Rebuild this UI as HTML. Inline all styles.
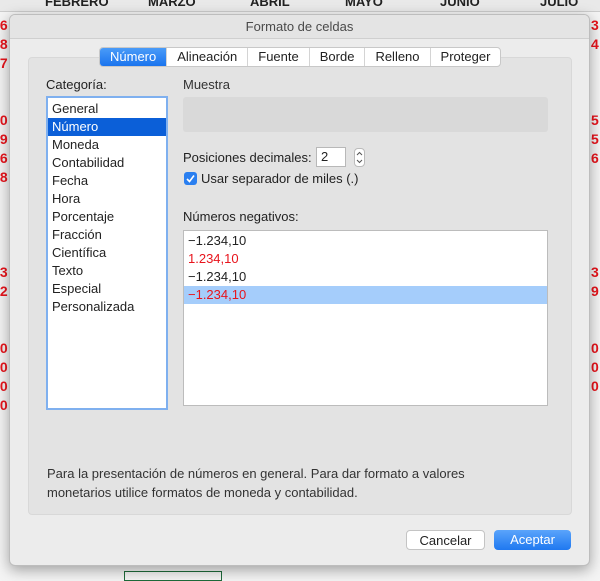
<!DOCTYPE html>
<html><head><meta charset="utf-8"><style>
*{margin:0;padding:0;box-sizing:border-box}
body{width:600px;height:579px;overflow:hidden;background:#f4f4f4;font-family:"Liberation Sans",sans-serif;font-size:13px;color:#222;position:relative}
.a{position:absolute}
.red{color:#e8141c}
.hdr{left:0;top:0;width:600px;height:12px;background:#e9e9e9;border-bottom:1px solid #ccc;font-weight:bold;font-size:13px;overflow:hidden}
.dlg{left:9px;top:14px;width:581px;height:552px;background:#ececec;border:1px solid #bdbdbd;border-radius:6px;box-shadow:0 4px 14px rgba(0,0,0,.35);overflow:hidden}
.title{left:0;top:0;width:100%;height:24px;background:#e4e4e4;border-bottom:1px solid #cfcfcf;text-align:center;line-height:24px;color:#4a4a4a;font-size:13px}
.panel{left:18px;top:42px;width:544px;height:458px;background:#e3e3e3;border-radius:4px;border:1px solid #d8d8d8}
.tabs{left:89px;top:32px;height:20px;display:flex;background:#fff;border:1px solid #c8c8c8;border-radius:4px;overflow:hidden}
.tabs div{padding:0 10px;line-height:18px;border-left:1px solid #d4d4d4;font-size:13px}
.tabs div:first-child{border-left:none;background:linear-gradient(#4a9bf8,#1a74ee);color:#fff}
.list{background:#fff;border:1px solid #bcbcbc}
.row{height:18px;line-height:18px;padding-left:4px;font-size:13px}
.btn{height:20px;border-radius:4px;text-align:center;line-height:19px;font-size:13px}
</style></head><body>
<div class="a hdr"><span style="position:absolute;left:45px;top:-6px">FEBRERO</span><span style="position:absolute;left:148px;top:-6px">MARZO</span><span style="position:absolute;left:250px;top:-6px">ABRIL</span><span style="position:absolute;left:345px;top:-6px">MAYO</span><span style="position:absolute;left:440px;top:-6px">JUNIO</span><span style="position:absolute;left:540px;top:-6px">JULIO</span></div>
<div class="a red" style="left:-4px;top:16px;font-size:14px;line-height:19px;font-weight:bold">,6<br>,8<br>,7<br><br><br>,0<br>,9<br>,6<br>,8<br><br><br><br><br>,3<br>,2<br><br><br>,0<br>,0<br>,0<br>,0</div>
<div class="a red" style="left:591px;top:16px;font-size:14px;line-height:19px;font-weight:bold">3<br>4<br><br><br><br>5<br>5<br>6<br><br><br><br><br><br>3<br>9<br><br><br>0<br>0<br>0</div>
<div class="a" style="left:124px;top:571px;width:98px;height:10px;border:1px solid #1e6b3a"></div>
<div class="a dlg">
 <div class="a title">Formato de celdas</div>
 <div class="a panel"></div>
 <div class="a tabs"><div>Número</div><div>Alineación</div><div>Fuente</div><div>Borde</div><div>Relleno</div><div>Proteger</div></div>
 <div class="a" style="left:36px;top:62px">Categoría:</div>
 <div class="a list" style="left:36px;top:81px;width:122px;height:314px;border:2px solid #7fb0ef;padding-top:2px">
  <div class="row">General</div><div class="row" style="background:#0b5fd8;color:#fff">Número</div><div class="row">Moneda</div><div class="row">Contabilidad</div><div class="row">Fecha</div><div class="row">Hora</div><div class="row">Porcentaje</div><div class="row">Fracción</div><div class="row">Científica</div><div class="row">Texto</div><div class="row">Especial</div><div class="row">Personalizada</div>
 </div>
 <div class="a" style="left:173px;top:62px;color:#333">Muestra</div>
 <div class="a" style="left:173px;top:82px;width:365px;height:35px;background:#d9d9d9;border-radius:3px"></div>
 <div class="a" style="left:173px;top:135px">Posiciones decimales:</div>
 <div class="a" style="left:306px;top:132px;width:30px;height:20px;background:#fff;border:1px solid #b8b8b8;padding-left:4px;line-height:18px">2</div>
 <div class="a" style="left:344px;top:133px;width:11px;height:19px;background:#fff;border:1px solid #bbb;border-radius:4px"><svg width="9" height="17" viewBox="0 0 9 17"><path d="M2 6 L4.5 3.5 L7 6 M2 11 L4.5 13.5 L7 11" fill="none" stroke="#555" stroke-width="1"/></svg></div>
 <div class="a" style="left:174px;top:157px;width:13px;height:13px;background:#2a7ff0;border-radius:3px"><svg width="13" height="13"><path d="M3 7 L5.5 9.5 L10 3.5" fill="none" stroke="#fff" stroke-width="1.6"/></svg></div>
 <div class="a" style="left:191px;top:156px">Usar separador de miles (.)</div>
 <div class="a" style="left:173px;top:194px">Números negativos:</div>
 <div class="a list" style="left:173px;top:215px;width:365px;height:176px;padding-top:1px">
  <div class="row">−1.234,10</div><div class="row red">1.234,10</div><div class="row">−1.234,10</div><div class="row red" style="background:#a5cdfb">−1.234,10</div>
 </div>
 <div class="a" style="left:37px;top:449px;line-height:19px;color:#333">Para la presentación de números en general. Para dar formato a valores<br>monetarios utilice formatos de moneda y contabilidad.</div>
 <div class="a btn" style="left:396px;top:515px;width:79px;background:#fff;border:1px solid #c4c4c4">Cancelar</div>
 <div class="a btn" style="left:484px;top:515px;width:77px;background:linear-gradient(#5aa4fb,#1f78f0);color:#fff">Aceptar</div>
</div>
</body></html>
